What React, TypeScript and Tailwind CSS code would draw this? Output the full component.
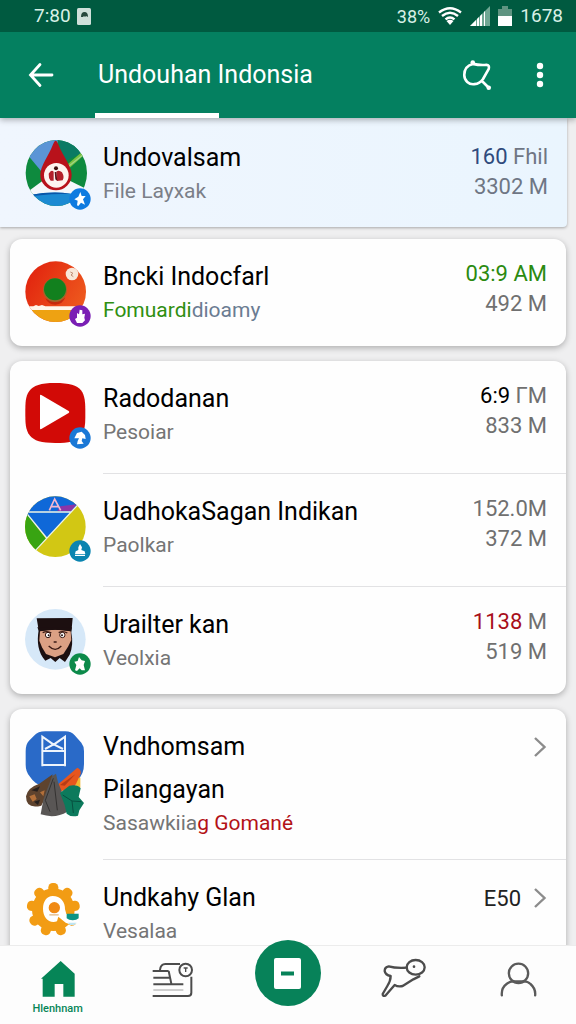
import React from "react";

type Row = {
  title: string;
  second?: string;
  subtitle: React.ReactNode;
  icon: React.ReactNode;
  badge?: React.ReactNode;
  meta?: React.ReactNode;
  size?: string;
  link?: string | true;
  last?: boolean;
};

const Badge = ({ color, children }: { color: string; children: React.ReactNode }) => (
  <svg viewBox="0 0 66 66" className={`absolute -right-1 -bottom-1 size-[22px] ${color}`} aria-hidden="true">
    <circle cx="33" cy="33" r="32" fill="currentColor" />
    <g fill="#fff">{children}</g>
  </svg>
);

const DropIcon = () => (
  <svg viewBox="72 45 186 198" className="h-[66px] w-[62px]" aria-hidden="true">
    <clipPath id="drop">
      <ellipse cx="166" cy="144" rx="92" ry="99" />
    </clipPath>
    <g clipPath="url(#drop)">
      <path fill="#0e8a3e" d="M70 40h195v210H70z" />
      <path fill="#5b95d6" d="M80 40h90v30l-48 70-40-48z" />
      <path fill="#0b7a63" d="M170 45h60l20 35-60 30z" />
      <path fill="#7cc142" d="m200 118 46-40 6 10-50 44z" />
      <path fill="#9fd68a" d="m202 122 48-38 2 3-50 40z" />
      <path fill="#f5f7fa" d="m70 208 54-40 84 0 60 30v14H70z" />
      <path fill="#1c8ad2" d="M90 209q70-12 130-2l20 40H100z" />
      <path fill="#0a56a8" d="M92 209q60-12 118-3-60 0-116 7z" />
      <path fill="#b8121b" d="M164 47q4 0 10 16c9 25 38 60 38 86a47 47 0 0 1-94 0c0-26 27-61 36-86q6-16 10-16Z" />
      <circle cx="166" cy="151" r="37" fill="#fdf3ef" />
      <circle cx="165" cy="130" r="6" fill="#3c0e0e" />
      <path fill="#b3202a" d="M143 146q8-14 15-6v27h-9q-7-8-6-21Zm23-6q8-6 17 2 8 14 2 24l-17 2z" />
      <path fill="#5c1015" d="m161 141 5 0 3 27-6-5z" />
    </g>
  </svg>
);

const PlateIcon = () => (
  <svg viewBox="75 73 186 186" className="size-[62px]" aria-hidden="true">
    <defs>
      <clipPath id="plate">
        <circle cx="167" cy="165" r="91" />
      </clipPath>
      <linearGradient id="plateRed" x1="0" x2="1" y1="0" y2=".6">
        <stop stopColor="#e01c0c" />
        <stop offset="1" stopColor="#ee5a1e" />
      </linearGradient>
    </defs>
    <g clipPath="url(#plate)">
      <path fill="url(#plateRed)" d="M70 70h195v190H70z" />
      <path fill="#c42a0c" d="M136 184q30 22 60-2-8 22-30 22t-30-20Z" />
      <path fill="#fff6ea" d="M70 209h30l8-4 8 3 10-3 10 4h124v11H70z" />
      <path fill="#eea212" d="M70 220h190v45H70z" />
      <circle cx="165" cy="160" r="36" fill="#a0662a" />
      <circle cx="165" cy="158" r="33" fill="#12801e" />
    </g>
    <circle cx="216" cy="112" r="19" fill="#f8e6d8" />
    <path fill="none" stroke="#c08a72" strokeWidth="3" d="m211 106 8 4-6 5 7 5" />
  </svg>
);

const PlayIcon = () => (
  <svg viewBox="75 66 186 186" className="size-[62px]" aria-hidden="true">
    <path
      fill="#d20a06"
      d="M76 156c0-30 0-50 12-66s34-24 77-24 66 6 78 22 13 36 13 68 0 52-14 68-34 22-76 22-64-6-77-23-13-38-13-67Z"
    />
    <path fill="#fff" d="M120 104q0-4 4-2l82 48q4 3 0 6l-82 48q-4 2-4-2z" />
  </svg>
);

const CompassIcon = () => (
  <svg viewBox="75 58 186 186" className="size-[62px]" aria-hidden="true">
    <clipPath id="compass">
      <circle cx="166" cy="150" r="91" />
    </clipPath>
    <g clipPath="url(#compass)">
      <path fill="#d2c714" d="M70 50h195v200H70z" />
      <path fill="#0f68d8" d="M70 50h175l-15 38-90 96-70-80z" />
      <path fill="#8a35a8" d="m172 103 8-14 50-6-16 20z" />
      <path fill="#38a412" d="m70 100 68 86-34 42-34-10z" />
      <path fill="none" stroke="#eef4e4" strokeWidth="4" d="M80 106h132M80 110l60 74M104 224 232 86" />
      <path fill="none" stroke="#f3b8d0" strokeWidth="5" d="m148 101 16-34 18 34M154 90h22" />
    </g>
  </svg>
);

const FaceIcon = () => (
  <svg viewBox="75 51 186 186" className="size-[62px]" aria-hidden="true">
    <circle cx="166" cy="142" r="91" fill="#d6e8f8" />
    <path
      fill="#1c0f10"
      d="m110 79 108-1-4 44c5 24 3 46-5 66l-14 22-16-12-13 12-14-12-16 8c-22-24-26-56-20-92z"
    />
    <path fill="#dba084" d="M120 118q46-10 92 0l2 26-10 20-14 22-25 10-27-10-12-20-8-20z" />
    <path fill="#1c0f10" d="M112 106h104l-3 12q-48-9-96 0z" />
    <g fill="#fff" stroke="#3a1a14" strokeWidth="3">
      <circle cx="144" cy="129" r="8" />
      <circle cx="187" cy="129" r="8" />
    </g>
    <path fill="none" stroke="#3a1a14" strokeWidth="4" d="M128 122q14-7 26 1m22-1q12-7 26 1M146 162q20 20 38 0M161 150h9" />
    <circle cx="146" cy="130" r="3" fill="#201010" />
    <circle cx="186" cy="130" r="3" fill="#201010" />
  </svg>
);

const CampIcon = () => (
  <svg viewBox="75 50 186 258" className="h-[86px] w-[62px]" aria-hidden="true">
    <path fill="#2a6ac8" d="M102 64q12-13 34-13h60q18 0 28 12l20 22q8 10 8 26v38q0 32-20 48l-30 18h-74q-24-6-38-28-13-14-13-36v-40q0-22 10-32z" />
    <path fill="none" stroke="#eef4fc" strokeWidth="6" d="M127 156V67l34 24 34-24v89M127 110h68M125 152h72M135 104l26-14 28 14" />
    <path fill="#f0b832" d="M226 190h15v30h-15z" />
    <path fill="#e6561e" d="m172 212 60-52q12 4 10 18l-22 48-38 4z" />
    <path fill="#b53c16" d="m180 212 46-32-32 34z" />
    <path fill="#5e432e" d="M78 246q4-26 40-38l40-28-12 50-22 44q-46 12-46-28Z" />
    <path fill="#b3703a" d="m88 246 16-6 6 14-12 8zm32-12 14-6-4 18z" />
    <path fill="#26201e" d="m94 228 26-12-8 16zm8 34 18-6-6 16z" />
    <path fill="#595655" d="m156 186 12-8 6 26 18 44 10 44q-36 22-80 8l8-44z" />
    <path fill="none" stroke="#343231" strokeWidth="3" d="m160 192-24 66 14 34m12-90 10 86" />
    <path fill="#0c7a5c" d="m180 236 28-22q26-4 34 8l-6 26 16 18-14 22-4 16q-20 6-34-6l-6-26z" />
    <path fill="none" stroke="#075040" strokeWidth="3" d="m188 242 28 18 4 36m-4-36 28 2" />
  </svg>
);

const GearIcon = () => {
  const teeth = [0, 40, 80, 120, 160, 200, 240, 280, 320];
  return (
    <svg viewBox="75 90 186 186" className="size-[62px]" aria-hidden="true">
      <g fill="#f29c14">
        <circle cx="160" cy="173" r="64" />
        {teeth.map((angle) => (
          <rect key={angle} x="145" y="93" width="30" height="50" rx="13" transform={`rotate(${angle} 160 173)`} />
        ))}
      </g>
      <path fill="#fff" d="M158 132c24 0 38 18 37 40l4 14h42l-4 26-20 8-20-8-22-18-4 14c-24 8-42-12-42-38 0-22 12-38 29-38Z" />
      <circle cx="163" cy="167" r="17" fill="#f08a14" />
      <path fill="#e8c8a0" d="M148 186h28v5h-28z" />
      <path fill="#0b9484" d="M200 185h36v14q-6 6-18 6t-18-6z" />
      <path fill="#bde4f2" d="M204 212h26l-8 7h-12z" />
    </svg>
  );
};

const groups: Row[][] = [
  [
    {
      title: "Bncki Indocfarl",
      subtitle: (
        <>
          <span className="text-[#2f8f12]">Fomuardi</span>
          <span className="text-[#6b7c92]">dioamy</span>
        </>
      ),
      icon: <PlateIcon />,
      badge: (
        <Badge color="text-[#7a1fb4]">
          <path d="m24 24 6 4 2-14 8 2v12l8-2-2 12 2 8-8 8H24l-6-12 6-4z" />
        </Badge>
      ),
      meta: <span className="text-[#2b8a10]">03:9 AM</span>,
      size: "492 M",
      last: true,
    },
  ],
  [
    {
      title: "Radodanan",
      subtitle: "Pesoiar",
      icon: <PlayIcon />,
      badge: (
        <Badge color="text-[#1a78d6]">
          <path d="m16 34 8-16 14-4 10 10 2 12-10-2-2 8 6 8-20 2 2-10 4-8z" />
        </Badge>
      ),
      meta: (
        <>
          <span className="text-black">6:9</span> ΓM
        </>
      ),
      size: "833 M",
    },
    {
      title: "UadhokaSagan Indikan",
      subtitle: "Paolkar",
      icon: <CompassIcon />,
      badge: (
        <Badge color="text-[#0a84b0]">
          <path d="m33 12 6 10-2 8 10 4 2 8H18l2-8 8-4 0-8zM18 44h30v4H18z" />
        </Badge>
      ),
      meta: "152.0M",
      size: "372 M",
    },
    {
      title: "Urailter kan",
      subtitle: "Veolxia",
      icon: <FaceIcon />,
      badge: (
        <Badge color="text-[#0c8a4a]">
          <path d="m30 12 8 10 10 2-4 12 4 16-10 0-6-6-8 8-6-2 4-16-6-10 10-2z" />
        </Badge>
      ),
      meta: (
        <>
          <span className="text-[#a80f1a]">1138</span> M
        </>
      ),
      size: "519 M",
      last: true,
    },
  ],
  [
    {
      title: "Vndhomsam",
      second: "Pilangayan",
      subtitle: (
        <>
          Sasawkiia<span className="text-[#b31217]">g Gomané</span>
        </>
      ),
      icon: <CampIcon />,
      link: true,
    },
    { title: "Undkahy Glan", subtitle: "Vesalaa", icon: <GearIcon />, link: "E50", last: true },
  ],
];

const Chevron = () => (
  <svg viewBox="0 0 14 22" className="h-[22px] w-3.5" fill="none" stroke="#8c8c8c" strokeWidth="2.4" aria-hidden="true">
    <path d="m2 2 9.5 9L2 20" />
  </svg>
);

const ListRow = ({ row }: { row: Row }) => (
  <li className="flex gap-4 pl-[15px]">
    <div className="pt-[22px]">
      <div className="relative">
        {row.icon}
        {row.badge}
      </div>
    </div>
    <div
      className={`flex min-w-0 flex-1 justify-between pt-5 pr-[19px] ${
        row.last ? "pb-[19px]" : row.second ? "border-b border-[#e2e2e4] pb-[19px]" : "border-b border-[#e2e2e4] pb-6"
      }`}
    >
      <div className="pt-0.5">
        <h2 className="text-[25px] leading-8 text-black">{row.title}</h2>
        {row.second && <p className="mt-[11px] text-[25px] leading-8 text-black">{row.second}</p>}
        <p className="text-[21px] leading-[34px] text-[#757575]">{row.subtitle}</p>
      </div>
      {row.link ? (
        <a href="#detail" aria-label={row.title} className="flex h-9 items-center gap-3 text-[22px] text-[#222]">
          {row.link !== true && <span>{row.link}</span>}
          <Chevron />
        </a>
      ) : (
        <div className="text-right text-[22px] leading-[30px] text-[#707070]">
          <p>{row.meta}</p>
          <p>{row.size}</p>
        </div>
      )}
    </div>
  </li>
);

const StatusBar = () => (
  <div className="flex h-8 items-center justify-between bg-[#005a40] pr-[13px] pl-[34px] text-[19px] text-[#d8f0e6]">
    <div className="flex items-center gap-1.5">
      <span>7:80</span>
      <svg viewBox="0 0 14 17" className="h-[17px] w-3.5" aria-hidden="true">
        <rect width="14" height="17" rx="1.5" fill="#cfe0da" />
        <path fill="#27493d" d="M4 9q0-5 3.500-5T11 9L9 8 8 9 7 8 6 9z" />
      </svg>
    </div>
    <div className="flex items-center gap-2">
      <span className="text-[18px]">38%</span>
      <svg viewBox="0 0 24 18" className="h-[18px] w-6" fill="none" stroke="#fff" strokeWidth="2.400" aria-hidden="true">
        <path d="M1 5.500q11-8.500 22 0M4 9q8-6.500 16 0M7.500 12.400q4.500-4 9 0" />
        <path fill="#fff" stroke="none" d="M8.500 14q3.500-2.500 7 0L12 18z" />
      </svg>
      <svg viewBox="0 0 20 20" className="size-5" aria-hidden="true">
        <path fill="#6fa793" d="M0 20 20 0v20z" />
        <path fill="#fff" d="m0 20 6-6v6zm7-7 2-2v9H7zm3-3 2-2v12h-2zm4-4 1-1v15h-1z" />
      </svg>
      <svg viewBox="0 0 14 20" className="h-5 w-3.5" aria-hidden="true">
        <path fill="#5f9481" d="M4 0h6v3h4v8H0V3h4z" />
        <path fill="#fff" d="M0 10h14v10H0z" />
      </svg>
      <span>1678</span>
    </div>
  </div>
);

const AppBar = () => (
  <header className="relative z-10 bg-[#048060] text-white shadow-[0_2px_6px_rgba(0,0,0,0.3)]">
    <StatusBar />
    <div className="flex h-[81px] items-center pt-1 pr-8 pl-7">
      <button type="button" aria-label="Kembali">
        <svg viewBox="0 0 26 26" className="size-[26px]" fill="none" stroke="#fff" strokeWidth="2.800" strokeLinecap="round" aria-hidden="true">
          <path d="M12 2.500 2.500 13 12 23.500M3 13h21" />
        </svg>
      </button>
      <h1 className="ml-11 flex-1 text-[25px] leading-8">Undouhan Indonsia</h1>
      <button type="button" aria-label="Cari" className="mr-11">
        <svg viewBox="516 170 90 98" className="h-8 w-[30px]" fill="none" stroke="#fff" strokeWidth="8" strokeLinecap="round" strokeLinejoin="round" aria-hidden="true">
          <path d="M548 185c-16 4-26 17-26 34 0 18 14 30 31 28 12-1 20-6 26-15l18-32q3-12-7-12-20 2-42-3M577 238l20 20" />
          <circle cx="548" cy="181" r="7" fill="#fff" stroke="none" />
          <circle cx="597" cy="258" r="7" fill="#fff" stroke="none" />
        </svg>
      </button>
      <button type="button" aria-label="Menu lainnya">
        <svg viewBox="0 0 8 26" className="h-[26px] w-2" fill="#fff" aria-hidden="true">
          <circle cx="4" cy="4" r="3.200" />
          <circle cx="4" cy="13" r="3.200" />
          <circle cx="4" cy="22" r="3.200" />
        </svg>
      </button>
    </div>
    <div className="ml-[95px] h-[5px] w-[124px] bg-white" />
  </header>
);

const BottomNav = () => (
  <nav className="relative z-10 grid h-[79px] grid-cols-5 border-t border-[#ececec] bg-[#fdfdfd]">
    <a href="#home" className="flex flex-col items-center pt-[15px] text-[#068557]">
      <svg viewBox="118 334 102 108" className="h-9 w-[34px]" fill="currentColor" aria-hidden="true">
        <path d="m177 334 42 38v69h-34v-38h-26v38h-36v-54l-5 0z" />
      </svg>
      <span className="mt-1 text-[11px] leading-4 font-medium">Hlenhnam</span>
    </a>
    <a href="#files" aria-label="Berkas" className="flex flex-col items-center pt-[15px]">
      <svg viewBox="456 337 126 111" className="h-[37px] w-[42px]" fill="none" stroke="#4c4c4c" strokeWidth="6" aria-hidden="true">
        <path d="M480 364q2-18 16-18h44M574 384v48q0 10-10 10H458M458 367h48M460 387h48M460 407h90M506 367l8 38" />
        <path stroke="#b8b8b8" strokeWidth="4" d="M460 424h90" />
        <circle cx="557" cy="364" r="19" />
        <path strokeWidth="4" d="M551 358h12M557 358v12" />
      </svg>
    </a>
    <button
      type="button"
      aria-label="Tambah"
      className="-mt-1.5 flex size-[66px] items-center justify-center justify-self-center rounded-full bg-[#078259]"
    >
      <svg viewBox="0 0 27 31" className="h-[31px] w-[27px]" aria-hidden="true">
        <rect width="27" height="31" rx="2" fill="#fff" />
        <path fill="#078259" d="M7 13.500h13v4H7z" />
      </svg>
    </button>
    <a href="#activity" aria-label="Aktivitas" className="flex flex-col items-center pt-3">
      <svg viewBox="285 324 135 120" className="h-10 w-[45px]" fill="none" stroke="#4c4c4c" strokeWidth="7" strokeLinejoin="round" strokeLinecap="round" aria-hidden="true">
        <path d="M362 353q-34 2-54-4-12 2-12 14 2 12 18 15 0 14-10 30l-14 24q0 8 8 5l28-32q10 6 24 3l32-20 18-9" />
        <ellipse cx="389" cy="352" rx="27" ry="22" />
        <circle cx="384" cy="350" r="4" fill="#4c4c4c" stroke="none" />
      </svg>
    </a>
    <a href="#profile" aria-label="Profil" className="flex flex-col items-center pt-4">
      <svg viewBox="629 336 110 105" className="h-[35px] w-[37px]" fill="none" stroke="#5a5a5a" strokeWidth="7" strokeLinecap="round" aria-hidden="true">
        <circle cx="684" cy="370" r="29" />
        <path d="M634 436q-2-22 14-34 10-8 20-8h32q12 0 20 8 16 14 14 34" />
      </svg>
    </a>
  </nav>
);

const App = () => (
  <div className="flex h-screen flex-col bg-[#efeff0] font-[Roboto,sans-serif]">
    <AppBar />
    <main className="flex-1 overflow-y-auto [scrollbar-width:none]">
      <section className="mr-[9px] rounded-br bg-[#eef6fe] bg-linear-to-r from-[#f0f6fe] to-[#eaf5fe] shadow-[0_1px_3px_rgba(0,0,0,0.3)]">
        <div className="flex gap-4 pt-[22px] pr-[19px] pb-[19px] pl-[25px]">
          <div className="relative self-start">
            <DropIcon />
            <Badge color="text-[#0f7be0]">
              <path d="m34 12 4 12 12 0-8 10 6 16-12-6-8 10-4-2 2-14-10-4 12-8z" />
            </Badge>
          </div>
          <div className="flex-1 pt-0.5">
            <h2 className="text-[25px] leading-8 text-black">Undovalsam</h2>
            <p className="text-[21px] leading-[34px] text-[#7b7f88]">File Layxak</p>
          </div>
          <div className="pt-0.5 text-right text-[22px] leading-[30px] text-[#6f7684]">
            <p>
              <span className="text-[#2f4a7c]">160</span> Fhil
            </p>
            <p>3302 M</p>
          </div>
        </div>
      </section>
      <div className="mt-3 mr-2.5 ml-2.5 flex flex-col gap-[15px]">
        {groups.map((rows, index) => (
          <ul key={index} className="rounded-xl bg-[#fefefe] shadow-[0_2px_6px_rgba(0,0,0,0.28)]">
            {rows.map((row) => (
              <ListRow key={row.title} row={row} />
            ))}
          </ul>
        ))}
      </div>
    </main>
    <BottomNav />
  </div>
);

export default App;
